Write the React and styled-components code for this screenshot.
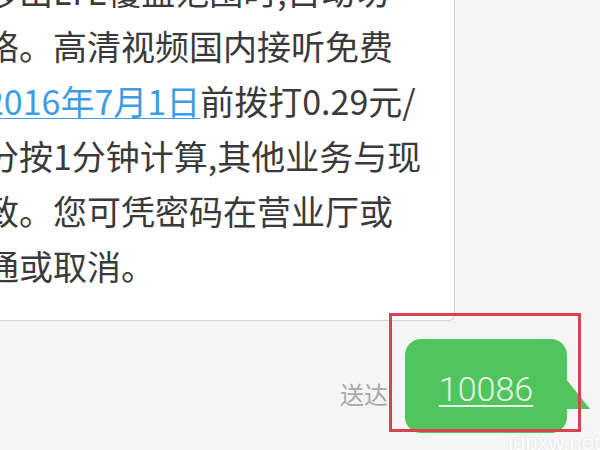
import React from "react";
import styled, { createGlobalStyle } from "styled-components";

const Global = createGlobalStyle`
  html, body { margin: 0; padding: 0; background: #f5f5f5; }
  body { width: 600px; height: 450px; overflow: hidden; }
`;

const Screen = styled.div`
  position: relative;
  width: 600px;
  height: 450px;
  overflow: hidden;
  background: #f5f5f5;
  display: flex;
  flex-direction: column;
  font-family: "Noto Sans CJK SC", "Noto Sans", sans-serif;
`;

const ReceivedBubble = styled.div`
  margin-left: -30px;
  margin-top: -37px;
  width: 485px;
  box-sizing: border-box;
  padding: 0 0 27px 15px;
  background: #ffffff;
  border-right: 1px solid #d6d6d6;
  border-bottom: 1px solid #d6d6d6;
  border-bottom-right-radius: 6px;
`;

const Line = styled.div`
  font-size: 34px;
  line-height: 55px;
  height: 55px;
  color: #3a3a3a;
  white-space: nowrap;
  letter-spacing: 0;
`;

const Link = styled.span`
  color: #3c9de6;
  text-decoration: underline;
  text-decoration-thickness: 1px;
  text-underline-offset: 3px;
`;

const FooterRow = styled.div`
  display: flex;
  justify-content: flex-end;
  align-items: center;
  gap: 17px;
  padding-right: 33px;
  margin-top: 18px;
`;

const Status = styled.span`
  font-size: 24px;
  color: #a9a9a9;
  padding-top: 14px;
`;

const SentBubble = styled.div`
  position: relative;
  width: 162px;
  height: 94px;
  box-sizing: border-box;
  padding-top: 6px;
  background: #50c45d;
  border-radius: 16px;
  display: flex;
  align-items: center;
  justify-content: center;
`;

const Number = styled.span`
  font-family: Roboto, "Liberation Sans", sans-serif;
  font-weight: 300;
  font-size: 34px;
  color: #eaf7e6;
  text-decoration: underline;
  text-decoration-thickness: 2px;
  text-underline-offset: 4px;
`;

const Tail = styled.svg`
  position: absolute;
  right: -23px;
  top: 40px;
  width: 24px;
  height: 30px;
`;

const Highlight = styled.div`
  position: absolute;
  left: 389px;
  top: 313px;
  width: 192px;
  height: 119px;
  box-sizing: border-box;
  border: 3px solid #d6434f;
  pointer-events: none;
`;

const Watermark = styled.div`
  position: absolute;
  right: 0;
  bottom: -6px;
  font-family: "Liberation Sans", Arial, sans-serif;
  font-size: 22px;
  color: #ffffff;
  text-shadow: 0 0 2px rgba(0, 0, 0, 0.15);
  opacity: 0.9;
`;

export default function App() {
  return (
    <>
      <Global />
      <Screen>
        <ReceivedBubble>
          <Line>移出LTE覆盖范围时,自动切</Line>
          <Line>络。高清视频国内接听免费</Line>
          <Line>
            <Link>2016年7月1日</Link>前拨打0.29元/
          </Line>
          <Line>分按1分钟计算,其他业务与现</Line>
          <Line>致。您可凭密码在营业厅或</Line>
          <Line>通或取消。</Line>
        </ReceivedBubble>
        <FooterRow>
          <Status>送达</Status>
          <SentBubble>
            <Number>10086</Number>
            <Tail viewBox="0 0 24 30">
              <polygon points="0,0 24,30 0,30" fill="#50c45d" />
            </Tail>
          </SentBubble>
        </FooterRow>
        <Highlight />
        <Watermark>idbxw.net</Watermark>
      </Screen>
    </>
  );
}
